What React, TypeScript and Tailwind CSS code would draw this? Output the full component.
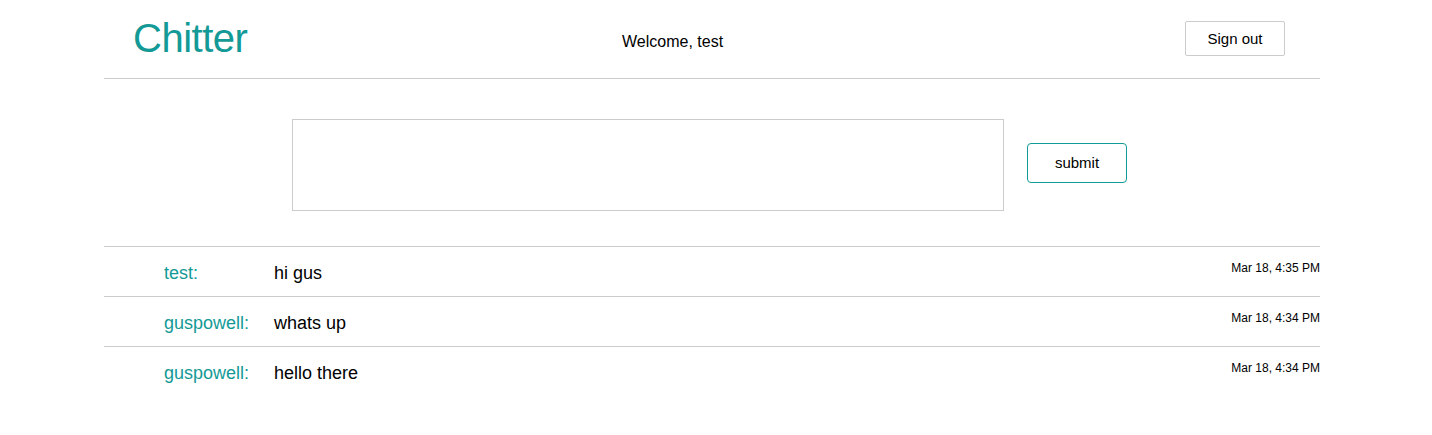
import React from "react";

const posts = [
  { user: "test:", text: "hi gus", time: "Mar 18, 4:35 PM" },
  { user: "guspowell:", text: "whats up", time: "Mar 18, 4:34 PM" },
  { user: "guspowell:", text: "hello there", time: "Mar 18, 4:34 PM" },
];

export default function App() {
  return (
    <div className="min-h-[435px] bg-white font-['Liberation_Sans',Arial,sans-serif] text-black">
      <div className="ml-[104px] w-[1216px]">
        <header className="flex h-[79px] items-center border-b border-[#cccccc]">
          <div className="w-[518px] pl-[29px] pb-[2px] text-[40px] leading-none tracking-[-0.5px] text-[#139a96]">
            Chitter
          </div>
          <div className="pt-[6px] text-[16px] leading-none">Welcome, test</div>
          <button className="ml-auto mr-[35px] mb-[2px] h-[35px] w-[100px] rounded-[2px] border border-[#cccccc] bg-white text-[15px] leading-none">
            Sign out
          </button>
        </header>

        <div className="flex items-center pl-[188px] pt-[40px] pb-[35px]">
          <textarea className="h-[92px] w-[712px] resize-none border border-[#cccccc] outline-none" />
          <button className="ml-[23px] mb-[5px] h-[40px] w-[100px] rounded-[4px] border border-[#139a96] bg-white text-[15px] leading-none">
            submit
          </button>
        </div>

        <div>
          {posts.map((p, i) => (
            <div key={i} className="flex h-[50px] border-t border-[#cccccc]">
              <div className="w-[170px] pl-[60px] pt-[15px] text-[18px] leading-[22px] text-[#139a96]">
                {p.user}
              </div>
              <div className="pt-[15px] text-[18px] leading-[22px]">{p.text}</div>
              <div className="ml-auto pt-[14px] text-[12px] leading-[14px]">{p.time}</div>
            </div>
          ))}
        </div>
      </div>
    </div>
  );
}
